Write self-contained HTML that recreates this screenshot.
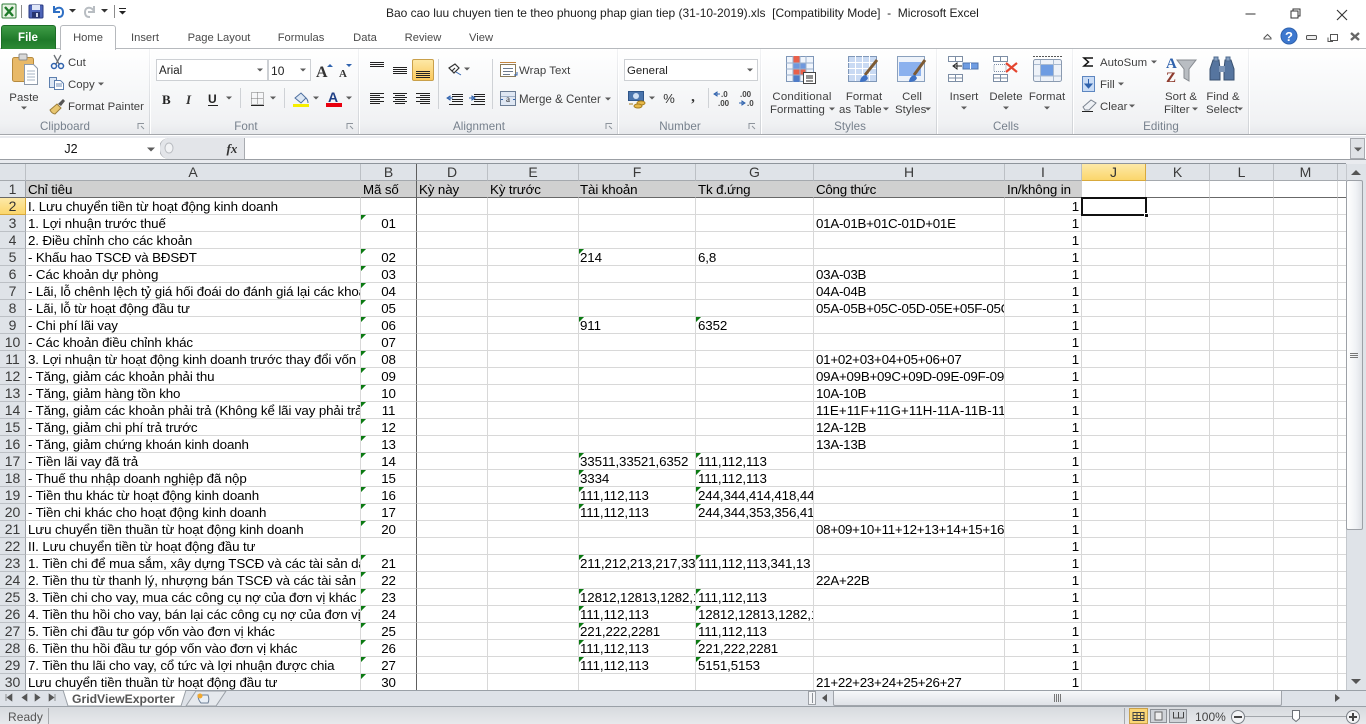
<!DOCTYPE html>
<html lang="vi"><head><meta charset="utf-8"><title>Microsoft Excel</title>
<style>
html,body{margin:0;padding:0;width:1366px;height:724px;overflow:hidden;background:#fff}
*{box-sizing:border-box}
body{position:relative;font-family:"Liberation Sans",sans-serif}
.a{position:absolute}
.t{position:absolute;white-space:nowrap;font-size:11.4px;line-height:14px;color:#3f3f3f;letter-spacing:.05px}
.c{transform:translateX(-50%)}
.l{color:#76808c;font-size:11.6px}
.tab{color:#4a4a4a;font-size:11.2px;letter-spacing:0}
#rib{position:absolute;left:0;top:49px;width:1366px;height:86px;background:linear-gradient(#fff 0,#f8f9fa 40%,#f0f1f3 88%,#e7e9ec 100%);border-bottom:1px solid #a4a7ab}
.sep{position:absolute;top:49px;height:85px;width:2px;background:linear-gradient(#f2f3f5,#cfd2d6);border-right:1px solid #fff}
.box{position:absolute;background:#fff;border:1px solid #cdd0d4}
table{position:absolute;left:0;top:164px;border-collapse:separate;border-spacing:0;table-layout:fixed;width:1346px;font-size:13.33px;color:#000;letter-spacing:-.12px}
td,th{height:17px;padding:2px 2px 0;line-height:14px;border-right:1px solid #d8d8d8;border-bottom:1px solid #d8d8d8;overflow:hidden;white-space:nowrap;font-weight:normal;text-align:left;vertical-align:middle}
td:nth-child(6){padding-left:1px}
td:nth-child(8){letter-spacing:-.25px}
th{background:#dfe3e8;border-right:1px solid #bcc0c5;border-bottom:1px solid #a5a9ae;text-align:center;color:#3a3a3a;font-size:14px;padding:0;line-height:16px;letter-spacing:0}
td.r,th.r{background:#dfe3e8;border-right:1px solid #9ea2a8;border-bottom:1px solid #bcc0c5;text-align:center;color:#3a3a3a;font-size:14px;padding:0;line-height:16px;letter-spacing:0}
th.s,td.s{background:linear-gradient(#fde9a8,#fbd66c);border-bottom:1px solid #d8a93c;border-right:1px solid #d8a93c;color:#333}
tr.h td{background:#d0d0d0;border-right-color:#d0d0d0;border-bottom:1px solid #686868}
tr.h td.r{background:#dfe3e8;border-bottom:1px solid #686868;border-right-color:#9ea2a8}
tr.h td.w{background:#fff;border-right-color:#d8d8d8}
td.d,th.d{border-right:1px solid #5e5e5e!important}
td.n{text-align:center}
td.i{text-align:right}
td.g{background:linear-gradient(135deg,#0b7a12 3.5px,rgba(0,0,0,0) 3.6px) no-repeat 0 0/6px 6px}
</style></head><body>

<div class="t" style="left:386px;top:6px;color:#1e1e1e;font-size:12px;letter-spacing:-.02px;word-spacing:0">Bao cao luu chuyen tien te theo phuong phap gian tiep (31-10-2019).xls&nbsp; [Compatibility Mode]&nbsp; -&nbsp; Microsoft Excel</div>

<!-- tab and ribbon shapes -->
<div class="a" style="left:0;top:48px;width:1366px;height:1px;background:#b6b9bd"></div>
<div class="a" style="left:1px;top:25px;width:55px;height:24px;background:linear-gradient(#3f9c46,#1f7a2a 60%,#2d8a35);border-radius:3px 3px 0 0;border:1px solid #1d6d27;border-bottom:0"></div>
<div class="a" style="left:60px;top:25px;width:56px;height:25px;background:#fff;border:1px solid #b6b9bd;border-bottom:0;border-radius:3px 3px 0 0;z-index:3"></div>
<div id="rib"></div>
<div class="sep" style="left:149px"></div><div class="sep" style="left:358px"></div><div class="sep" style="left:617px"></div><div class="sep" style="left:760px"></div><div class="sep" style="left:936px"></div><div class="sep" style="left:1072px"></div><div class="sep" style="left:1248px"></div>
<div class="box" style="left:156px;top:59px;width:112px;height:22px"></div>
<div class="box" style="left:268px;top:59px;width:43px;height:22px"></div>
<div class="a" style="left:412px;top:59px;width:22px;height:22px;background:linear-gradient(#fde8a6,#fbc95c);border:1px solid #c9a04a;border-radius:2px"></div>
<div class="box" style="left:624px;top:59px;width:134px;height:22px"></div>

<!-- tab and ribbon text -->
<div class="a" style="left:0;top:1px">
<div class="t c" style="left:28px;top:30px;color:#fff;font-weight:bold;font-size:11.5px">File</div>
<div class="t c tab" style="left:88px;top:30px;z-index:4">Home</div>
<div class="t c tab" style="left:145px;top:30px">Insert</div>
<div class="t c tab" style="left:219px;top:30px">Page Layout</div>
<div class="t c tab" style="left:301px;top:30px">Formulas</div>
<div class="t c tab" style="left:365px;top:30px">Data</div>
<div class="t c tab" style="left:423px;top:30px">Review</div>
<div class="t c tab" style="left:481px;top:30px">View</div>

<div class="t c l" style="left:65px;top:119px">Clipboard</div>
<div class="t c l" style="left:246px;top:119px">Font</div>
<div class="t c l" style="left:479px;top:119px">Alignment</div>
<div class="t c l" style="left:680px;top:119px">Number</div>
<div class="t c l" style="left:850px;top:119px">Styles</div>
<div class="t c l" style="left:1006px;top:119px">Cells</div>
<div class="t c l" style="left:1161px;top:119px">Editing</div>

<div class="t c" style="left:24px;top:90px">Paste</div>
<div class="t" style="left:68px;top:55px">Cut</div>
<div class="t" style="left:68px;top:77px">Copy</div>
<div class="t" style="left:68px;top:99px">Format Painter</div>

<div class="t" style="left:159px;top:63px;color:#222;font-size:11.5px">Arial</div>
<div class="t" style="left:271px;top:63px;color:#222;font-size:12px">10</div>

<div class="t" style="left:519px;top:63px">Wrap Text</div>
<div class="t" style="left:519px;top:92px;font-size:11.5px">Merge &amp; Center</div>

<div class="t" style="left:627px;top:63px;color:#222">General</div>
<div class="t c" style="left:669px;top:91px;font-size:13px;color:#333">%</div>
<div class="t c" style="left:693px;top:89px;font-size:15px;font-weight:bold;color:#333;font-family:'Liberation Serif',serif">,</div>

<div class="t c" style="left:802px;top:89px;letter-spacing:.2px">Conditional</div>
<div class="t" style="left:770px;top:102px">Formatting</div>
<div class="t c" style="left:864px;top:89px">Format</div>
<div class="t" style="left:839px;top:102px">as Table</div>
<div class="t c" style="left:912px;top:89px">Cell</div>
<div class="t" style="left:895px;top:102px">Styles</div>

<div class="t c" style="left:964px;top:89px">Insert</div>
<div class="t c" style="left:1006px;top:89px">Delete</div>
<div class="t c" style="left:1047px;top:89px">Format</div>

<div class="t" style="left:1100px;top:55px">AutoSum</div>
<div class="t" style="left:1100px;top:77px">Fill</div>
<div class="t" style="left:1100px;top:99px">Clear</div>
<div class="t c" style="left:1181px;top:89px">Sort &amp;</div>
<div class="t" style="left:1164px;top:102px">Filter</div>
<div class="t c" style="left:1223px;top:89px">Find &amp;</div>
<div class="t" style="left:1206px;top:102px">Select</div>
</div>

<!-- formula bar -->
<div class="a" style="left:0;top:136px;width:1366px;height:28px;background:#e9ebef"></div>
<div class="a" style="left:0;top:138px;width:1366px;height:22px;background:#fff;border-bottom:1px solid #9b9fa4"></div>
<div class="a" style="left:159px;top:138px;width:86px;height:21px;background:#e3e5e9;border-right:1px solid #a8abb0;border-left:1px solid #a8abb0;border-radius:10px 0 0 10px"></div>
<div class="a" style="left:153px;top:138px;width:7px;height:21px;background:#fff"></div>
<div class="a" style="left:1350px;top:138px;width:15px;height:21px;background:#dfe2e6;border:1px solid #a8abb0"></div>
<div class="t c" style="left:71px;top:142px;color:#111;font-size:12.5px">J2</div>
<div class="t c" style="left:232px;top:141px;font:italic bold 13px/15px 'Liberation Serif',serif;color:#333">fx</div>

<!-- grid -->
<div class="a" style="left:0;top:163px;width:1346px;height:1px;background:#8f959c"></div>
<table><colgroup><col style="width:26px"><col style="width:335px"><col style="width:56px"><col style="width:71px"><col style="width:91px"><col style="width:117px"><col style="width:118px"><col style="width:191px"><col style="width:77px"><col style="width:64px"><col style="width:64px"><col style="width:64px"><col style="width:64px"><col style="width:8px"></colgroup>
<tr><th></th><th>A</th><th class="d">B</th><th>D</th><th>E</th><th>F</th><th>G</th><th>H</th><th>I</th><th class="s">J</th><th>K</th><th>L</th><th>M</th><th style="border-right:0"></th></tr>
<tr class="h"><td class="r">1</td><td>Chỉ tiêu</td><td class="d">Mã số</td><td>Kỳ này</td><td>Kỳ trước</td><td>Tài khoản</td><td>Tk đ.ứng</td><td>Công thức</td><td class="i" style="overflow:hidden;text-align:left">In/không in</td><td class="w"></td><td class="w"></td><td class="w"></td><td class="w"></td><td class="w" style="border-right:0"></td></tr>
<tr><td class="r s">2</td><td>I. Lưu chuyển tiền từ hoạt động kinh doanh</td><td class="d"></td><td></td><td></td><td></td><td></td><td></td><td class="i">1</td><td></td><td></td><td></td><td></td><td style="border-right:0"></td></tr>
<tr><td class="r">3</td><td>1. Lợi nhuận trước thuế</td><td class="d n g">01</td><td></td><td></td><td></td><td></td><td>01A-01B+01C-01D+01E</td><td class="i">1</td><td></td><td></td><td></td><td></td><td style="border-right:0"></td></tr>
<tr><td class="r">4</td><td>2. Điều chỉnh cho các khoản</td><td class="d"></td><td></td><td></td><td></td><td></td><td></td><td class="i">1</td><td></td><td></td><td></td><td></td><td style="border-right:0"></td></tr>
<tr><td class="r">5</td><td>- Khấu hao TSCĐ và BĐSĐT</td><td class="d n g">02</td><td></td><td></td><td class="g">214</td><td>6,8</td><td></td><td class="i">1</td><td></td><td></td><td></td><td></td><td style="border-right:0"></td></tr>
<tr><td class="r">6</td><td>- Các khoản dự phòng</td><td class="d n g">03</td><td></td><td></td><td></td><td></td><td>03A-03B</td><td class="i">1</td><td></td><td></td><td></td><td></td><td style="border-right:0"></td></tr>
<tr><td class="r">7</td><td>- Lãi, lỗ chênh lệch tỷ giá hối đoái do đánh giá lại các khoản mục tiền tệ</td><td class="d n g">04</td><td></td><td></td><td></td><td></td><td>04A-04B</td><td class="i">1</td><td></td><td></td><td></td><td></td><td style="border-right:0"></td></tr>
<tr><td class="r">8</td><td>- Lãi, lỗ từ hoạt động đầu tư</td><td class="d n g">05</td><td></td><td></td><td></td><td></td><td>05A-05B+05C-05D-05E+05F-05G</td><td class="i">1</td><td></td><td></td><td></td><td></td><td style="border-right:0"></td></tr>
<tr><td class="r">9</td><td>- Chi phí lãi vay</td><td class="d n g">06</td><td></td><td></td><td class="g">911</td><td class="g">6352</td><td></td><td class="i">1</td><td></td><td></td><td></td><td></td><td style="border-right:0"></td></tr>
<tr><td class="r">10</td><td>- Các khoản điều chỉnh khác</td><td class="d n g">07</td><td></td><td></td><td></td><td></td><td></td><td class="i">1</td><td></td><td></td><td></td><td></td><td style="border-right:0"></td></tr>
<tr><td class="r">11</td><td>3. Lợi nhuận từ hoạt động kinh doanh trước thay đổi vốn lưu động</td><td class="d n g">08</td><td></td><td></td><td></td><td></td><td>01+02+03+04+05+06+07</td><td class="i">1</td><td></td><td></td><td></td><td></td><td style="border-right:0"></td></tr>
<tr><td class="r">12</td><td>- Tăng, giảm các khoản phải thu</td><td class="d n g">09</td><td></td><td></td><td></td><td></td><td>09A+09B+09C+09D-09E-09F-09G</td><td class="i">1</td><td></td><td></td><td></td><td></td><td style="border-right:0"></td></tr>
<tr><td class="r">13</td><td>- Tăng, giảm hàng tồn kho</td><td class="d n g">10</td><td></td><td></td><td></td><td></td><td>10A-10B</td><td class="i">1</td><td></td><td></td><td></td><td></td><td style="border-right:0"></td></tr>
<tr><td class="r">14</td><td>- Tăng, giảm các khoản phải trả (Không kể lãi vay phải trả, thuế)</td><td class="d n g">11</td><td></td><td></td><td></td><td></td><td style="letter-spacing:.05px">11E+11F+11G+11H-11A-11B-11C</td><td class="i">1</td><td></td><td></td><td></td><td></td><td style="border-right:0"></td></tr>
<tr><td class="r">15</td><td>- Tăng, giảm chi phí trả trước</td><td class="d n g">12</td><td></td><td></td><td></td><td></td><td>12A-12B</td><td class="i">1</td><td></td><td></td><td></td><td></td><td style="border-right:0"></td></tr>
<tr><td class="r">16</td><td>- Tăng, giảm chứng khoán kinh doanh</td><td class="d n g">13</td><td></td><td></td><td></td><td></td><td>13A-13B</td><td class="i">1</td><td></td><td></td><td></td><td></td><td style="border-right:0"></td></tr>
<tr><td class="r">17</td><td>- Tiền lãi vay đã trả</td><td class="d n g">14</td><td></td><td></td><td class="g">33511,33521,6352</td><td class="g">111,112,113</td><td></td><td class="i">1</td><td></td><td></td><td></td><td></td><td style="border-right:0"></td></tr>
<tr><td class="r">18</td><td>- Thuế thu nhập doanh nghiệp đã nộp</td><td class="d n g">15</td><td></td><td></td><td class="g">3334</td><td class="g">111,112,113</td><td></td><td class="i">1</td><td></td><td></td><td></td><td></td><td style="border-right:0"></td></tr>
<tr><td class="r">19</td><td>- Tiền thu khác từ hoạt động kinh doanh</td><td class="d n g">16</td><td></td><td></td><td class="g">111,112,113</td><td class="g">244,344,414,418,441</td><td></td><td class="i">1</td><td></td><td></td><td></td><td></td><td style="border-right:0"></td></tr>
<tr><td class="r">20</td><td>- Tiền chi khác cho hoạt động kinh doanh</td><td class="d n g">17</td><td></td><td></td><td class="g">111,112,113</td><td class="g">244,344,353,356,414</td><td></td><td class="i">1</td><td></td><td></td><td></td><td></td><td style="border-right:0"></td></tr>
<tr><td class="r">21</td><td>Lưu chuyển tiền thuần từ hoạt động kinh doanh</td><td class="d n g">20</td><td></td><td></td><td></td><td></td><td>08+09+10+11+12+13+14+15+16+17</td><td class="i">1</td><td></td><td></td><td></td><td></td><td style="border-right:0"></td></tr>
<tr><td class="r">22</td><td>II. Lưu chuyển tiền từ hoạt động đầu tư</td><td class="d"></td><td></td><td></td><td></td><td></td><td></td><td class="i">1</td><td></td><td></td><td></td><td></td><td style="border-right:0"></td></tr>
<tr><td class="r">23</td><td>1. Tiền chi để mua sắm, xây dựng TSCĐ và các tài sản dài hạn khác</td><td class="d n g">21</td><td></td><td></td><td class="g">211,212,213,217,331</td><td class="g">111,112,113,341,13</td><td></td><td class="i">1</td><td></td><td></td><td></td><td></td><td style="border-right:0"></td></tr>
<tr><td class="r">24</td><td>2. Tiền thu từ thanh lý, nhượng bán TSCĐ và các tài sản dài hạn khác</td><td class="d n g">22</td><td></td><td></td><td></td><td></td><td>22A+22B</td><td class="i">1</td><td></td><td></td><td></td><td></td><td style="border-right:0"></td></tr>
<tr><td class="r">25</td><td>3. Tiền chi cho vay, mua các công cụ nợ của đơn vị khác</td><td class="d n g">23</td><td></td><td></td><td class="g">12812,12813,1282,128</td><td class="g">111,112,113</td><td></td><td class="i">1</td><td></td><td></td><td></td><td></td><td style="border-right:0"></td></tr>
<tr><td class="r">26</td><td>4. Tiền thu hồi cho vay, bán lại các công cụ nợ của đơn vị khác</td><td class="d n g">24</td><td></td><td></td><td class="g">111,112,113</td><td class="g">12812,12813,1282,128</td><td></td><td class="i">1</td><td></td><td></td><td></td><td></td><td style="border-right:0"></td></tr>
<tr><td class="r">27</td><td>5. Tiền chi đầu tư góp vốn vào đơn vị khác</td><td class="d n g">25</td><td></td><td></td><td class="g">221,222,2281</td><td class="g">111,112,113</td><td></td><td class="i">1</td><td></td><td></td><td></td><td></td><td style="border-right:0"></td></tr>
<tr><td class="r">28</td><td>6. Tiền thu hồi đầu tư góp vốn vào đơn vị khác</td><td class="d n g">26</td><td></td><td></td><td class="g">111,112,113</td><td class="g">221,222,2281</td><td></td><td class="i">1</td><td></td><td></td><td></td><td></td><td style="border-right:0"></td></tr>
<tr><td class="r">29</td><td>7. Tiền thu lãi cho vay, cổ tức và lợi nhuận được chia</td><td class="d n g">27</td><td></td><td></td><td class="g">111,112,113</td><td class="g">5151,5153</td><td></td><td class="i">1</td><td></td><td></td><td></td><td></td><td style="border-right:0"></td></tr>
<tr><td class="r">30</td><td>Lưu chuyển tiền thuần từ hoạt động đầu tư</td><td class="d n g">30</td><td></td><td></td><td></td><td></td><td>21+22+23+24+25+26+27</td><td class="i">1</td><td></td><td></td><td></td><td></td><td style="border-right:0"></td></tr>
</table>
<div class="a" style="left:1081px;top:197px;width:66px;height:19px;border:2px solid #111"></div>
<div class="a" style="left:1144px;top:213px;width:5px;height:5px;background:#111;border:1px solid #fff"></div>

<!-- vertical scrollbar -->
<div class="a" style="left:1346px;top:164px;width:20px;height:527px;background:#dfe3e8;border-left:1px solid #c4c8cd"></div>
<div class="a" style="left:1346px;top:180px;width:17px;height:350px;background:linear-gradient(90deg,#fff,#f0f2f5 60%,#dfe2e7);border:1px solid #9da1a7;border-radius:2px"></div>

<!-- sheet tabs & h scrollbar -->
<div class="a" style="left:0;top:690px;width:1366px;height:17px;background:#dee2e8;border-top:1px solid #9aa0a7;border-bottom:1px solid #9aa0a7"></div>
<div class="a" style="left:833px;top:691px;width:449px;height:15px;background:linear-gradient(#f7f8fa,#dfe2e7);border:1px solid #a1a5ab;border-top:0;border-radius:0 0 2px 2px"></div>
<div class="a" style="left:808px;top:691px;width:8px;height:14px;background:#f4f5f7;border:1px solid #9da1a7"></div>
<div class="a" style="left:812px;top:693px;width:1px;height:10px;background:#8d9197"></div>
<svg class="a" style="left:62px;top:690px" width="168" height="17"><path d="M1 0 L6 16 H119 L124 0Z" fill="#fff" stroke="#9aa0a7"/><path d="M124 16 L134 1 H164 L154 16Z" fill="#e6e9ed" stroke="#9aa0a7"/></svg>
<div class="t" style="left:72px;top:692px;font-weight:bold;font-size:12.2px;color:#555;letter-spacing:0">GridViewExporter</div>

<!-- status -->
<div class="a" style="left:0;top:707px;width:1366px;height:17px;background:linear-gradient(#d7dade,#e7e9ec)"></div>
<div class="a" style="left:48px;top:708px;width:1px;height:16px;background:#a5a8ac"></div>
<div class="a" style="left:1124px;top:708px;width:1px;height:16px;background:#a5a8ac"></div>
<div class="t" style="left:8px;top:710px;font-size:12px;color:#555">Ready</div>
<div class="t" style="left:1195px;top:710px;font-size:12px;color:#444">100%</div>

<!-- icons -->
<svg class="a" style="left:0;top:0;z-index:5;pointer-events:none" width="1366" height="724" viewBox="0 0 1366 724" fill="none">
<!-- QAT -->
<rect x="2" y="4" width="14" height="14" rx="1" fill="#e8f3e4" stroke="#2f7d37"/><path d="M5 7l8 9M13 7l-8 9" stroke="#1f7a2a" stroke-width="2.4"/>
<path d="M21.5 5v13M114.5 5v13" stroke="#8b8b8b"/>
<rect x="29" y="5" width="14" height="13" rx="1" fill="#4d64b8" stroke="#2a3a80"/><rect x="32" y="5" width="8" height="5" fill="#dfe6f7"/><rect x="32" y="12" width="8" height="6" fill="#27346f"/><rect x="36" y="13" width="2" height="4" fill="#cfd6ec"/>
<path d="M54 6v6h6M54 11c3-5 9-4 9 1s-3 5-5 5" stroke="#2e6fc4" stroke-width="2"/>
<path d="M94 6v6h-6M94 11c-3-5-9-4-9 1s3 5 5 5" stroke="#b8bdc2" stroke-width="2"/>
<path d="M69 9h7l-3.5 3.5zM101 9h7l-3.5 3.5z" fill="#333"/><path d="M119 8h7v1h-7zM119 11h7l-3.5 3.5z" fill="#222"/>
<!-- window -->
<path d="M1245.5 14h10" stroke="#333"/><path d="M1291 11h7v7h-7zM1293 11V9h7v7h-2" stroke="#333"/><path d="M1337 10l10 10M1347 10l-10 10" stroke="#333" stroke-width="1.1"/>
<path d="M1264 38l3.5-3.5 3.500 3.500v1h-7z" stroke="#555" fill="#fff"/>
<circle cx="1289" cy="36" r="8" fill="#3d78cf" stroke="#2f62ad"/><text x="1289" y="41" text-anchor="middle" font-family="Liberation Sans" font-size="13" font-weight="bold" fill="#fff">?</text>
<rect x="1306.500" y="35.500" width="10" height="4" rx="1" stroke="#555" fill="#eee"/>
<path d="M1330.500 34.500h7v6h-7zM1328 37.500v4h5" stroke="#555"/><path d="M1351 33l8 7M1359 33l-8 7" stroke="#666" stroke-width="2.400"/>
<!-- arrows -->
<path fill="#5c5c5c" d="M21 106.500h6l-3 3zM98 82.500h6l-3 3zM257 68.500h6l-3 3zM300 68.500h6l-3 3zM226 96.500h6l-3 3zM270 96.500h6l-3 3zM313 96.500h6l-3 3zM346 96.500h6l-3 3zM464 67.500h6l-3 3zM605 97.500h6l-3 3zM747 68.500h6l-3 3zM649 96.500h6l-3 3zM829 107.500h6l-3 3zM883 107.500h6l-3 3zM925 107.500h6l-3 3zM961 106.500h6l-3 3zM1003 106.500h6l-3 3zM1044 106.500h6l-3 3zM1151 60.500h6l-3 3zM1118 82.500h6l-3 3zM1129 104.500h6l-3 3zM1192 107.500h6l-3 3zM1237 107.500h6l-3 3zM147 147.500h8l-4 4zM1354 147.500h8l-4 4z"/>
<!-- launchers -->
<g stroke="#8d949c"><path d="M138 123.500h6M138 123v6"/><path d="M347 123.500h6M347 123v6M606 123.500h6M606 123v6M749 123.500h6M749 123v6"/><path d="M141 126l3 3M350 126l3 3M609 126l3 3M752 126l3 3"/></g>
<!-- paste -->
<rect x="12.500" y="57.500" width="21" height="24" rx="2" fill="#e8b968" stroke="#b68a3e"/><rect x="19" y="54" width="8" height="6" rx="1" fill="#d8d8d8" stroke="#8b8b8b"/><path d="M24.500 64.500h9l4 4v16h-13z" fill="#fff" stroke="#8e9aa9"/><path d="M27 71h8M27 74h8M27 77h8M27 80h8" stroke="#a7b4c4"/>
<!-- cut -->
<path d="M54 55l5 9M61 55l-5 9" stroke="#6a6f75" stroke-width="1.300"/><circle cx="54" cy="66" r="2.500" stroke="#2f62ad" stroke-width="1.500"/><circle cx="61" cy="66" r="2.500" stroke="#2f62ad" stroke-width="1.500"/>
<!-- copy -->
<path d="M49.500 77.500h7v10h-7z" fill="#dce7f5" stroke="#5d7fae"/><path d="M54.500 80.500h6l3 3v6h-9z" fill="#fff" stroke="#5d7fae"/><path d="M56 84h6M56 86h6" stroke="#6d8bb5"/>
<!-- format painter -->
<path d="M50 110l7-6 4 4-6 6c-2 0-4-2-5-4z" fill="#e8c670" stroke="#9a7d3a"/><path d="M58 104l5-5 2 2-4 5z" fill="#555"/>
<!-- font -->
<text x="316" y="77" font-family="Liberation Serif" font-weight="bold" font-size="16" fill="#333">A</text><path d="M327 67l3-3 3 3z" fill="#2f62ad"/>
<text x="339" y="77" font-family="Liberation Serif" font-weight="bold" font-size="11" fill="#333">A</text><path d="M346 64h6l-3 3z" fill="#2f62ad"/>
<text x="162" y="104" font-family="Liberation Serif" font-weight="bold" font-size="13" fill="#222">B</text>
<text x="186" y="104" font-family="Liberation Serif" font-style="italic" font-weight="bold" font-size="13" fill="#333">I</text>
<text x="208" y="103" font-family="Liberation Sans" font-weight="bold" font-size="12" fill="#222">U</text><path d="M208 105.500h10" stroke="#222"/>
<path d="M240.500 88v20M284.500 88v20M438.500 59v50M492.500 59v50M708.500 88v20" stroke="#cfd2d6"/>
<path d="M251.500 92.500h12v12h-12zM257.500 92.500v12M251.500 98.500h12" stroke="#777" stroke-dasharray="1 1"/><path d="M251 105.500h13" stroke="#222"/>
<path d="M295 98l6-5 5 5-5 5z" fill="#dbe6f3" stroke="#4d6f9f"/><path d="M306 98c2 2 2 4 2 5" stroke="#4d6f9f"/><rect x="293" y="104" width="16" height="3" fill="#f6ee00"/>
<text x="328" y="102" font-family="Liberation Sans" font-weight="bold" font-size="14" fill="#1e3f85">A</text><rect x="326" y="103" width="16" height="4" fill="#e9000f"/>
<!-- align -->
<path stroke="#222" d="M370 62.500h14M370 64.500h14M370 66.500h14M393 67.500h14M393 69.500h14M393 71.500h14M393 73.500h14M416 71.500h14M416 73.500h14M416 75.500h14M416 77.500h14"/>
<path stroke="#222" d="M370 93.500h14M370 95.500h10M370 97.500h14M370 99.500h10M370 101.500h14M370 103.500h10M393 93.500h14M395 95.500h10M393 97.500h14M395 99.500h10M393 101.500h14M395 103.500h10M416 93.500h14M420 95.500h10M416 97.500h14M420 99.500h10M416 101.500h14M420 103.500h10"/>
<path d="M449 68l6-4 4 4-5 5zM452 71l3-3" stroke="#333" stroke-width="1.200"/><path d="M456 72l5 3" stroke="#2f62ad"/>
<path stroke="#222" d="M452 94.500h11M452 96.500h11M452 99.500h11M452 101.500h11M449 104.500h14M474 94.500h11M474 96.500h11M474 99.500h11M474 101.500h11M471 104.500h14"/><path d="M447 98h6M447 98l3-2v4zM469 98h6M475 98l-3-2v4z" stroke="#2f62ad"/>
<!-- wrap / merge -->
<rect x="500.500" y="64.500" width="15" height="12" fill="#fff" stroke="#8a7a58"/><path d="M500 62.500h16" stroke="#c5843c"/><path d="M503 68.500h10M503 71.500h10M503 74.500h7" stroke="#6c7a8d"/><path d="M517 72v3h-3" stroke="#2f62ad"/>
<rect x="500.500" y="91.500" width="15" height="14" fill="#dfe7f3" stroke="#6b7d95"/><path d="M501 96.500h14" stroke="#9fb0c7"/><text x="508" y="102" text-anchor="middle" font-family="Liberation Serif" font-size="9" fill="#222">a</text><path d="M501 99.500h2M515 99.500h-2" stroke="#2f62ad"/>
<!-- number -->
<rect x="628.500" y="91.500" width="15" height="9" fill="#4a75ad" stroke="#2f5588"/><ellipse cx="636" cy="96" rx="3" ry="3" fill="#cfe0f4"/><ellipse cx="641" cy="103" rx="4" ry="2" fill="#e7b94b" stroke="#a87f20"/><ellipse cx="638" cy="106" rx="4" ry="2" fill="#e7b94b" stroke="#a87f20"/><path d="M629 104h4" stroke="#a87f20"/>
<text x="721" y="97" font-family="Liberation Sans" font-weight="bold" font-size="8" fill="#444">.0</text><text x="718" y="106" font-family="Liberation Sans" font-weight="bold" font-size="8" fill="#444">.00</text><path d="M714 94h6M714 94l3-2v4z" stroke="#2f62ad"/>
<text x="740" y="97" font-family="Liberation Sans" font-weight="bold" font-size="8" fill="#444">.00</text><text x="747" y="106" font-family="Liberation Sans" font-weight="bold" font-size="8" fill="#444">.0</text><path d="M739 103h6M745 103l-3-2v4z" stroke="#2f62ad"/>
<!-- conditional formatting -->
<rect x="786.500" y="56.500" width="27" height="25" fill="#f0f5fc" stroke="#7f97b8"/><rect x="793" y="56" width="7" height="7" fill="#e9604a"/><rect x="793" y="63" width="13" height="6" fill="#6f98dd"/><rect x="793" y="69" width="13" height="6" fill="#e9604a"/><rect x="793" y="75" width="7" height="7" fill="#4f7cc8"/><path d="M793 56v26M800 56v26M806 56v26M786 63h27M786 69h27M786 75h27" stroke="#9ab0cd"/><rect x="803.500" y="72.500" width="12" height="11" fill="#fff" stroke="#444"/><path d="M806 76h7M806 78h7M806 81h7" stroke="#222"/>
<!-- format as table -->
<rect x="848.500" y="56.500" width="28" height="25" fill="#c9daf3" stroke="#7f97b8"/><path d="M848 62.500h28M848 68.500h28M848 74.500h28M855.500 56v25M862.500 56v25M869.500 56v25" stroke="#fff"/><path d="M877 60l-12 15" stroke="#7c5a34" stroke-width="3"/><path d="M860 82c0-4 3-7 6-7l2 3c-1 3-4 4-8 4z" fill="#3f72c4"/>
<!-- cell styles -->
<rect x="897.500" y="56.500" width="27" height="25" fill="#eef3fa" stroke="#8aa0bd"/><rect x="899" y="62" width="22" height="14" fill="#8bb1ee"/><path d="M925 60l-11 15" stroke="#7c5a34" stroke-width="3"/><path d="M909 82c0-4 3-7 6-7l2 3c-1 3-4 4-8 4z" fill="#3f72c4"/>
<!-- insert -->
<path d="M948.500 56.500h14v5h-14zM955.500 56.500v5M948.500 74.500h14v7h-14zM955.500 74.500v7M948.500 78h14" stroke="#7d8ea5" fill="#fff"/><rect x="963" y="63" width="15" height="6" fill="#6e9ce2" stroke="#4d74ad"/><path d="M970.500 63v6" stroke="#fff"/><path d="M953 66h9M953 66l4-3v6z" stroke="#222"/>
<!-- delete -->
<path d="M993.500 56.500h14v5h-14zM1000.500 56.500v5M993.500 74.500h14v7h-14zM1000.500 74.500v7M993.500 78h14" stroke="#7d8ea5" fill="#fff"/><path d="M994 64.500h12v7h-12z" stroke="#7d8ea5" stroke-dasharray="1 1"/><path d="M1006 63l11 9M1017 63l-11 9" stroke="#e4452f" stroke-width="2.200"/>
<!-- format -->
<rect x="1033.500" y="59.500" width="28" height="22" rx="2" fill="#eef2f8" stroke="#8a9ab0"/><rect x="1040" y="64" width="14" height="12" fill="#6e9ce2"/><path d="M1040.500 60v21M1053.500 60v21M1034 64.500h27M1034 76h27" stroke="#a9bad0"/><path d="M1033 56.500h29" stroke="#555" stroke-dasharray="2 1"/>
<!-- editing -->
<path d="M1093 58h-9l4.500 4-4.500 4h9" stroke="#111" stroke-width="1.500"/>
<rect x="1082.500" y="76.500" width="12" height="15" fill="#c9dcf6" stroke="#5d86c0"/><path d="M1088.500 79v7M1085 84l3.500 4 3.500-4z" stroke="#2f62ad" fill="#2f62ad"/>
<path d="M1083 107l8-7 5 3-7 7h-4z" fill="#eef1f5" stroke="#7b8490"/><path d="M1082 111.500h11" stroke="#222"/>
<text x="1166" y="68" font-family="Liberation Serif" font-weight="bold" font-size="15" fill="#2f62ad">A</text><text x="1166" y="82" font-family="Liberation Serif" font-weight="bold" font-size="15" fill="#8e3b2e">Z</text>
<path d="M1177 60h19l-7 9v12l-5-3v-9z" fill="#b9bdc2" stroke="#868a90"/>
<path d="M1210 69l3-9h6l1 9v11h-10zM1224 69l1-9h6l3 9v11h-10z" fill="#56759f" stroke="#38506f"/><rect x="1219" y="66" width="6" height="6" fill="#7d96b8"/><path d="M1214 57h4v4h-4zM1226 57h4v4h-4z" fill="#86a0c2" stroke="#4f6a8e"/>
<!-- formula bar bits -->
<ellipse cx="169" cy="148" rx="4" ry="5" fill="#f2f3f5" stroke="#b9bcc1"/>
<!-- scrollbars -->
<path d="M1351 175l5-5 5 5zM1351 679h10l-5 5z" fill="#555"/><path d="M1350 353.500h8M1350 355.500h8M1350 357.500h8" stroke="#777"/>
<path d="M1054.500 694v8M1056.500 694v8M1058.500 694v8M1060.500 694v8" stroke="#777"/>
<path d="M827 694v8l-5-4zM1335 694v8l5-4z" fill="#555"/>
<!-- sheet nav -->
<path d="M6 694v7M12 694v7l-5-3.500zM27 694v7l-5-3.500zM35 694v7l5-3.500zM49 694v7l5-3.500zM55 694v7" fill="#555" stroke="#555" stroke-width=".6"/>
<path d="M198 695h10c1 3 1 6 0 8h-7c-2-2-3-5-3-8z" fill="#eaf0f7" stroke="#6d7f96"/><circle cx="200" cy="696" r="2.500" fill="#f0a830"/>
<!-- status icons -->
<rect x="1129.500" y="708.500" width="18" height="15" fill="#fbd676" stroke="#c9a04a"/><path d="M1133 712.500h11v8h-11zM1133 715.500h11M1133 718.500h11M1137 712v8M1140.500 712v8" stroke="#444"/>
<rect x="1150.500" y="709.500" width="16" height="13" fill="#cfd3d8" stroke="#8d9197"/><rect x="1155" y="712" width="7" height="8" fill="#eee" stroke="#666"/>
<rect x="1169.500" y="709.500" width="17" height="13" fill="#cfd3d8" stroke="#8d9197"/><path d="M1173.500 712v6h10M1178.500 712v6M1183.500 712v6" stroke="#444"/>
<path d="M1245 716.500h101" stroke="#a2a6ab"/>
<circle cx="1238" cy="717" r="6.500" fill="#f3f4f6" stroke="#7b8087"/><path d="M1234 717h8" stroke="#444" stroke-width="2"/>
<circle cx="1353" cy="717" r="6.500" fill="#f3f4f6" stroke="#7b8087"/><path d="M1349 717h8M1353 713v8" stroke="#444" stroke-width="2"/>
<path d="M1292.500 710.500h7v8l-3.500 3-3.500-3z" fill="#fff" stroke="#6c7076"/>
</svg>
</body></html>
